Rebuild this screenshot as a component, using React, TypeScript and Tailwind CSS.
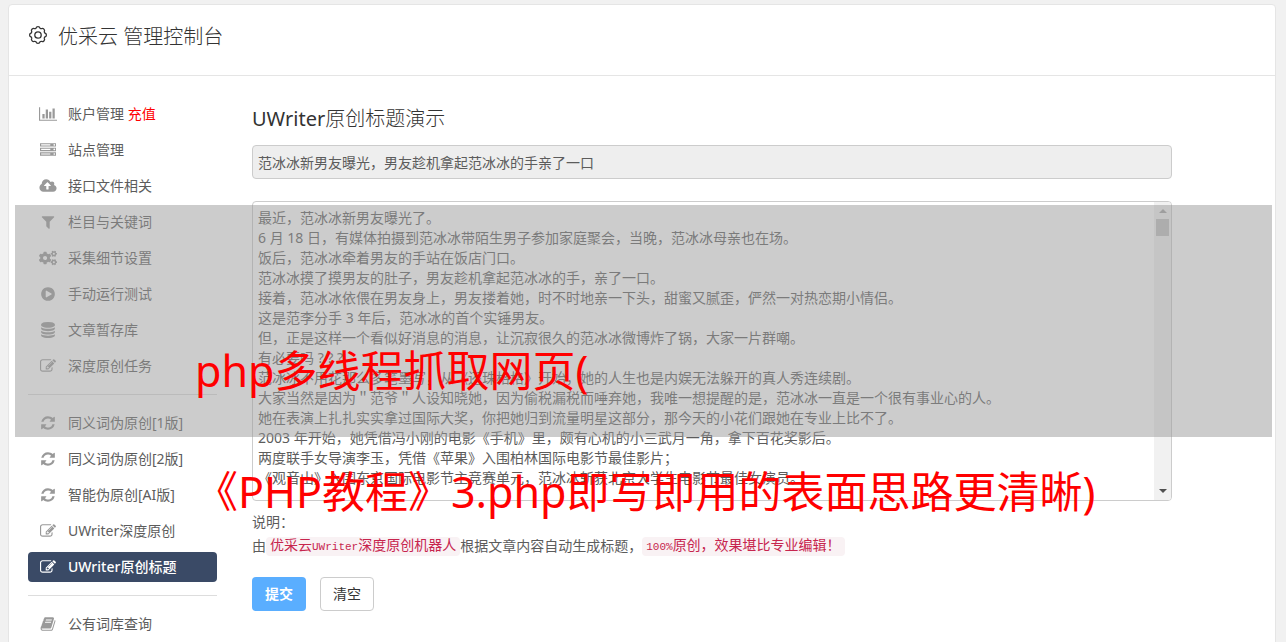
import React from "react";
import { FaCogs } from "react-icons/fa";

type IconProps = { name: keyof typeof paths };

// [viewBox, path]
const paths = {
  chart: [
    "0 0 2048 1792",
    "M640 896v512h-256v-512h256zm384-512v1024h-256v-1024h256zm1024 1152v128h-2048v-1536h128v1408h1920zm-640-896v768h-256v-768h256zm384-384v1152h-256v-1152h256z",
  ],
  server: [
    "0 0 1792 1792",
    "M128 1408h1024v-128h-1024v128zm0-512h1024v-128h-1024v128zm1568 448q0-40-28-68t-68-28-68 28-28 68 28 68 68 28 68-28 28-68zm-1568-960h1024v-128h-1024v128zm1568 448q0-40-28-68t-68-28-68 28-28 68 28 68 68 28 68-28 28-68zm0-512q0-40-28-68t-68-28-68 28-28 68 28 68 68 28 68-28 28-68zm96 832v384h-1792v-384h1792zm0-512v384h-1792v-384h1792zm0-512v384h-1792v-384h1792z",
  ],
  upload: [
    "0 0 1920 1792",
    "M1280 864q0-14-9-23l-352-352q-9-9-23-9t-23 9l-351 351q-10 12-10 24 0 14 9 23t23 9h224v352q0 13 9.5 22.5t22.5 9.5h192q13 0 22.5-9.5t9.5-22.5v-352h224q13 0 22.5-9.5t9.5-22.5zm640 288q0 159-112.5 271.5t-271.5 112.5h-1088q-185 0-316.5-131.5t-131.5-316.5q0-130 70-240t188-165q-2-30-2-43 0-212 150-362t362-150q156 0 285.5 87t188.5 231q71-62 166-62 106 0 181 75t75 181q0 76-41 138 130 31 213.5 135.5t83.5 238.5z",
  ],
  filter: [
    "0 0 1792 1792",
    "M1595 295q17 41-14 70l-493 493v742q0 42-39 59-13 5-25 5-27 0-45-19l-256-256q-19-19-19-45v-486l-493-493q-31-29-14-70 17-39 59-39h1280q42 0 59 39z",
  ],
  play: [
    "0 0 1792 1792",
    "M896 128q209 0 385.5 103t279.5 279.5 103 385.5-103 385.5-279.5 279.5-385.5 103-385.5-103-279.5-279.5-103-385.5 103-385.5 279.5-279.5 385.5-103zm384 823q32-18 32-55t-32-55l-544-320q-31-19-64-1-32 19-32 56v640q0 37 32 56 16 8 32 8 17 0 32-9z",
  ],
  database: [
    "0 0 1792 1792",
    "M896 768q237 0 443-43t325-127v170q0 69-103 128t-280 93.500-385 34.500-385-34.500-280-93.500-103-128v-170q119 84 325 127t443 43zm0 768q237 0 443-43t325-127v170q0 69-103 128t-280 93.500-385 34.500-385-34.500-280-93.500-103-128v-170q119 84 325 127t443 43zm0-384q237 0 443-43t325-127v170q0 69-103 128t-280 93.500-385 34.500-385-34.500-280-93.500-103-128v-170q119 84 325 127t443 43zm0-1152q208 0 385 34.500t280 93.500 103 128v128q0 69-103 128t-280 93.500-385 34.500-385-34.500-280-93.500-103-128v-128q0-69 103-128t280-93.500 385-34.500z",
  ],
  edit: [
    "0 0 1792 1792",
    "M888 1184l116-116-152-152-116 116v56h96v96h56zm440-720q-16-16-33 1l-350 350q-17 17-1 33t33-1l350-350q17-17 1-33zm80 594v190q0 119-84.500 203.500t-203.500 84.500h-832q-119 0-203.500-84.500t-84.500-203.500v-832q0-119 84.500-203.500t203.500-84.500h832q63 0 117 25 15 7 18 23 3 17-9 29l-49 49q-14 14-32 8-23-6-45-6h-832q-66 0-113 47t-47 113v832q0 66 47 113t113 47h832q66 0 113-47t47-113v-126q0-13 9-22l64-64q15-15 35-7t20 29zm-96-738l288 288-672 672h-288v-288zm444 132l-92 92-288-288 92-92q28-28 68-28t68 28l152 152q28 28 28 68t-28 68z",
  ],
  refresh: [
    "0 0 1792 1792",
    "M1639 1056q0 5-1 7-64 268-268 434.500t-478 166.500q-146 0-282.500-55t-243.500-157l-129 129q-19 19-45 19t-45-19-19-45v-448q0-26 19-45t45-19h448q26 0 45 19t19 45-19 45l-137 137q71 66 161 102t187 36q134 0 250-65t186-179q11-17 53-117 8-23 30-23h192q13 0 22.500 9.500t9.500 22.500zm25-800v448q0 26-19 45t-45 19h-448q-26 0-45-19t-19-45 19-45l138-138q-148-137-349-137-134 0-250 65t-186 179q-11 17-53 117-8 23-30 23h-199q-13 0-22.500-9.500t-9.500-22.500v-7q65-268 270-434.500t480-166.500q146 0 284 55.500t245 156.500l130-129q19-19 45-19t45 19 19 45z",
  ],
  book: [
    "0 0 1792 1792",
    "M1703 478q40 57 18 129l-275 906q-19 64-76.500 107.500t-122.500 43.500h-923q-77 0-148.500-53.500t-99.500-131.500q-24-67-2-127 0-4 3-27t4-37q1-8-3-21.500t-3-19.500q2-11 8-21t16.500-23.500 16.500-23.500q23-38 45-91.500t30-91.500q3-10 .5-30t-.5-28q3-11 17-28t17-23q21-36 42-92t25-90q1-9-2.500-32t.5-28q4-13 22-30.500t22-22.500q19-26 42.500-84.500t27.500-96.500q1-8-3-25.500t-2-26.500q2-8 9-18t18-23 17-21q8-12 16.500-30.500t15-35 16-36 19.500-32 26.500-23.500 36-11.500 47.500 5.500l-1 3q38-9 51-9h761q74 0 114 56t18 130l-274 906q-36 119-71.500 153.500t-128.500 34.500h-869q-27 0-38 15-11 16-1 43 24 70 144 70h923q29 0 56-15.500t35-41.500l300-987q7-22 5-57 38 15 59 43zm-1064 2q-4 13 2 22.500t20 9.500h608q13 0 25.500-9.500t16.500-22.500l21-64q4-13-2-22.500t-20-9.500h-608q-13 0-25.500 9.500t-16.500 22.500zm-83 256q-4 13 2 22.500t20 9.500h608q13 0 25.500-9.500t16.500-22.500l21-64q4-13-2-22.500t-20-9.500h-608q-13 0-25.500 9.500t-16.500 22.500z",
  ],
};

const Icon: React.FC<IconProps> = ({ name }) => (
  <svg viewBox={paths[name][0]} className="h-4 w-[18px]" fill="currentColor">
    <path d={paths[name][1]} />
  </svg>
);

const GearOutline: React.FC = () => (
  <svg
    viewBox="0 0 20 20"
    className="size-5"
    fill="none"
    stroke="currentColor"
    strokeWidth="1.3"
    strokeLinejoin="round"
  >
    <path d="M8 3.200Q8.400 1.600 10 1.600T12 3.200Q12.600 3.700 13.400 3.700Q14.800 2.900 15.900 4.100T16.300 6.600Q16.200 7.400 16.800 8Q18.400 8.400 18.400 10T16.800 12Q16.200 12.600 16.300 13.400Q17.100 14.800 15.900 15.900T13.400 16.300Q12.600 16.200 12 16.800Q11.600 18.400 10 18.400T8 16.800Q7.400 16.200 6.600 16.300Q5.200 17.100 4.100 15.900T3.700 13.400Q3.800 12.600 3.200 12Q1.600 11.600 1.600 10T3.200 8Q3.800 7.400 3.700 6.600Q2.900 5.200 4.100 4.100T6.600 3.700Q7.400 3.800 8 3.200z" />
    <circle cx="10" cy="10" r="3.200" />
  </svg>
);

const groups = [
  [
    { icon: "chart", label: "账户管理", extra: "充值" },
    { icon: "server", label: "站点管理" },
    { icon: "upload", label: "接口文件相关" },
    { icon: "filter", label: "栏目与关键词" },
    { icon: "cogs", label: "采集细节设置" },
    { icon: "play", label: "手动运行测试" },
    { icon: "database", label: "文章暂存库" },
    { icon: "edit", label: "深度原创任务" },
  ],
  [
    { icon: "refresh", label: "同义词伪原创[1版]" },
    { icon: "refresh", label: "同义词伪原创[2版]" },
    { icon: "refresh", label: "智能伪原创[AI版]" },
    { icon: "edit", label: "UWriter深度原创" },
    { icon: "edit", label: "UWriter原创标题", active: true },
  ],
  [{ icon: "book", label: "公有词库查询" }],
] as { icon: string; label: string; extra?: string; active?: boolean }[][];

const article = `最近，范冰冰新男友曝光了。
6 月 18 日，有媒体拍摄到范冰冰带陌生男子参加家庭聚会，当晚，范冰冰母亲也在场。
饭后，范冰冰牵着男友的手站在饭店门口。
范冰冰摸了摸男友的肚子，男友趁机拿起范冰冰的手，亲了一口。
接着，范冰冰依偎在男友身上，男友搂着她，时不时地亲一下头，甜蜜又腻歪，俨然一对热恋期小情侣。
这是范李分手 3 年后，范冰冰的首个实锤男友。
但，正是这样一个看似好消息的消息，让沉寂很久的范冰冰微博炸了锅，大家一片群嘲。
有必要吗 ? ? ?
范冰冰不用花那么多笔墨写，从《还珠格格》开始，她的人生也是内娱无法躲开的真人秀连续剧。
大家当然是因为＂范爷＂人设知晓她，因为偷税漏税而唾弃她，我唯一想提醒的是，范冰冰一直是一个很有事业心的人。
她在表演上扎扎实实拿过国际大奖，你把她归到流量明星这部分，那今天的小花们跟她在专业上比不了。
2003 年开始，她凭借冯小刚的电影《手机》里，颇有心机的小三武月一角，拿下百花奖影后。
两度联手女导演李玉，凭借《苹果》入围柏林国际电影节最佳影片；
《观音山》入围东京国际电影节主竞赛单元，范冰冰斩获北京大学生电影节最佳女演员。`;

const Sidebar: React.FC = () => (
  <nav className="w-[189px] shrink-0">
    {groups.map((items, i) => (
      <ul
        key={i}
        className={
          i === 0
            ? "flex flex-col gap-1.5"
            : "mt-[13px] flex flex-col gap-1.5 border-t border-[#dddddd] pt-[13px]"
        }
      >
        {items.map((item) => (
          <li key={item.label}>
            <a
              href="#"
              className={`flex h-[30px] items-center gap-[11px] rounded pl-[11px] ${
                item.active ? "bg-[#3a4a66] text-white" : "text-[#5c5c5c]"
              }`}
            >
              <span className={item.active ? "text-white" : "text-[#999999]"}>
                {item.icon === "cogs" ? (
                  <FaCogs className="h-4 w-[18px]" />
                ) : (
                  <Icon name={item.icon as keyof typeof paths} />
                )}
              </span>
              <span className={item.active ? "font-medium" : ""}>
                {item.label}
                {item.extra && (
                  <span className="text-[#ff0000]"> {item.extra}</span>
                )}
              </span>
            </a>
          </li>
        ))}
      </ul>
    ))}
  </nav>
);

const App: React.FC = () => {
  return (
    <div className="relative h-screen overflow-hidden bg-[#f1f1f1] px-2 pt-1 font-['Noto_Sans','Noto_Sans_CJK_SC',sans-serif] text-sm leading-5 text-[#5c5c5c]">
      <div className="mr-0.5 min-h-screen rounded border border-[#e5e5e5] bg-white">
        <header className="flex h-[71px] items-start gap-2.5 border-b border-[#e5e5e5] pt-4 pl-[19px] text-[#333333]">
          <span className="pt-1">
            <GearOutline />
          </span>
          <h1 className="text-xl leading-8 font-light">优采云 管理控制台</h1>
        </header>

        <div className="flex gap-[35px] pt-[23px] pl-[19px]">
          <Sidebar />

          <main className="min-w-0 flex-1 pr-[103px]">
            <h2 className="pt-1 text-xl leading-8 text-[#333333]">
              <label htmlFor="title">
                UWriter<span className="font-light">原创标题演示</span>
              </label>
            </h2>
            <input
              id="title"
              type="text"
              readOnly
              defaultValue="范冰冰新男友曝光，男友趁机拿起范冰冰的手亲了一口"
              className="mt-2.5 block h-[34px] w-full rounded border border-[#cccccc] bg-[#eeeeee] px-[5px] outline-none"
            />

            <div className="mt-[22px] flex h-[300px] overflow-hidden rounded border border-[#cccccc]">
              <textarea
                aria-label="文章内容"
                defaultValue={article}
                className="block min-w-0 flex-1 resize-none overflow-hidden px-[5px] py-1.5 leading-5 outline-none"
              />
              {/* scrollbar */}
              <div className="flex w-[17px] flex-col items-center bg-[#f1f1f1] py-[7px]">
                <div className="border-x-4 border-b-4 border-x-transparent border-b-[#a3a3a3]" />
                <div className="mt-1.5 h-[17px] w-[13px] bg-[#c1c1c1]" />
                <div className="mt-auto border-x-4 border-t-4 border-x-transparent border-t-[#505050]" />
              </div>
            </div>

            <p className="pt-[11px]">说明：</p>
            <p className="flex items-center pt-1">
              由
              <code className="rounded bg-[#f9f2f4] px-1 leading-[18px] font-['Liberation_Mono','Noto_Sans_CJK_SC',monospace] text-[#c7254e]">
                优采云<span className="text-[11px]">UWriter</span>深度原创机器人
              </code>
              根据文章内容自动生成标题，
              <code className="rounded bg-[#f9f2f4] px-1 leading-[18px] font-['Liberation_Mono','Noto_Sans_CJK_SC',monospace] text-[#c7254e]">
                <span className="text-[11px]">100%</span>原创，效果堪比专业编辑！
              </code>
            </p>

            <div className="flex gap-3.5 pt-[21px]">
              <button
                type="submit"
                className="h-[34px] w-[54px] rounded bg-[#5aaeff] font-bold text-white"
              >
                提交
              </button>
              <button
                type="reset"
                className="h-[34px] w-[54px] rounded border border-[#cccccc] bg-white text-[#333333]"
              >
                清空
              </button>
            </div>
          </main>
        </div>
      </div>

      {/* caption over the page */}
      <div className="pointer-events-none absolute inset-x-0 top-[205px] mr-3.5 ml-[15px] h-[232px] bg-[#999999]/50" />
      <div className="pointer-events-none absolute top-[310px] left-[195px] text-[43px] leading-[121px] whitespace-nowrap text-[#ff0000]">
        <p>php多线程抓取网页(</p>
        <p>《PHP教程》3.php即写即用的表面思路更清晰)</p>
      </div>
    </div>
  );
};

export default App;
